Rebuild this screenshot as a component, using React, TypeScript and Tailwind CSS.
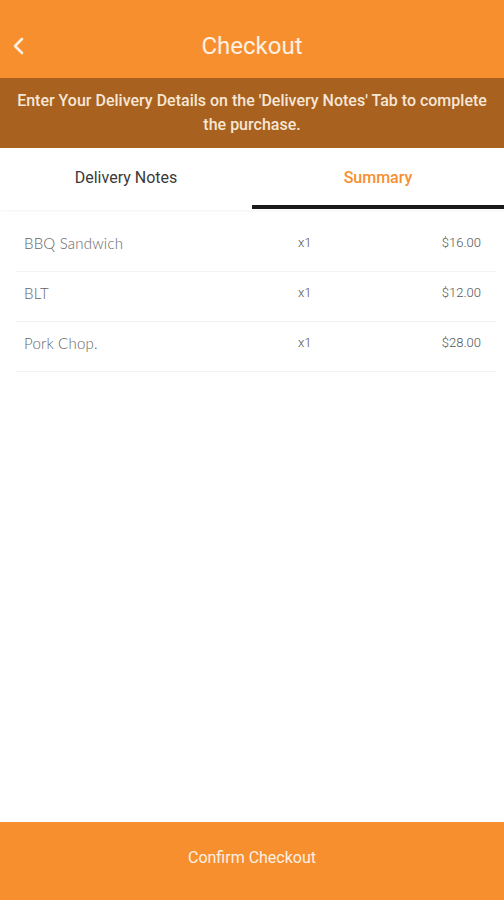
import React from 'react';

const items = [
  { name: 'BBQ Sandwich', qty: 'x1', price: '$16.00' },
  { name: 'BLT', qty: 'x1', price: '$12.00' },
  { name: 'Pork Chop.', qty: 'x1', price: '$28.00' },
];

const App: React.FC = () => {
  return (
    <div className="w-[504px] h-[900px] flex flex-col bg-white font-['Roboto',sans-serif]">
      {/* Header */}
      <div className="h-[78px] bg-[#f78f2f] relative flex items-center justify-center">
        <svg className="absolute left-[12px] top-[37px]" width="14" height="18" viewBox="0 0 14 18" fill="none">
          <path d="M10 2 L3 9 L10 16" stroke="#fdf1e4" strokeWidth="2.6" strokeLinecap="round" strokeLinejoin="round" />
        </svg>
        <h1 className="text-[24px] leading-[28px] text-[#fdf1e4] mt-[14px]">Checkout</h1>
      </div>

      {/* Banner */}
      <div className="h-[70px] bg-[#a8611f] flex items-center justify-center px-[12px]">
        <p className="text-center text-[16px] leading-[24px] font-medium text-[#f6e6d6]">
          Enter Your Delivery Details on the 'Delivery Notes' Tab to complete the purchase.
        </p>
      </div>

      {/* Tabs */}
      <div className="flex h-[62px] shadow-[0_1px_2px_rgba(0,0,0,0.05)]">
        <div className="flex-1 flex items-start justify-center pt-[20px] text-[16px] leading-[20px] text-[#3a3a3a]">Delivery Notes</div>
        <div className="flex-1 flex flex-col">
          <div className="flex-1 flex items-start justify-center pt-[20px] text-[16px] leading-[20px] font-medium text-[#f78f2f]">Summary</div>
          <div className="h-[4px] bg-[#1a1a1a] mb-[1px]" />
        </div>
      </div>

      {/* Items */}
      <div className="ml-[16px] mr-[8px] mt-[12px] flex flex-col">
        {items.map((item) => (
          <div key={item.name} className="h-[50px] flex items-start pt-[12px] border-b border-[#f3f3f3]">
            <span className="w-[282px] pl-[8px] text-[15px] leading-[18px] font-['Lato',sans-serif] font-light tracking-[0.2px] text-[#666]">{item.name}</span>
            <span className="w-[100px] text-[13px] leading-[18px] font-light text-[#555]">{item.qty}</span>
            <span className="flex-1 text-right pr-[15px] text-[13px] leading-[18px] font-light text-[#555]">{item.price}</span>
          </div>
        ))}
      </div>

      <div className="flex-1" />

      {/* Footer */}
      <div className="h-[78px] bg-[#f78f2f] flex items-start justify-center pt-[27px]">
        <span className="text-[16px] leading-[18px] text-[#fdf1e4]">Confirm Checkout</span>
      </div>
    </div>
  );
};

export default App;
